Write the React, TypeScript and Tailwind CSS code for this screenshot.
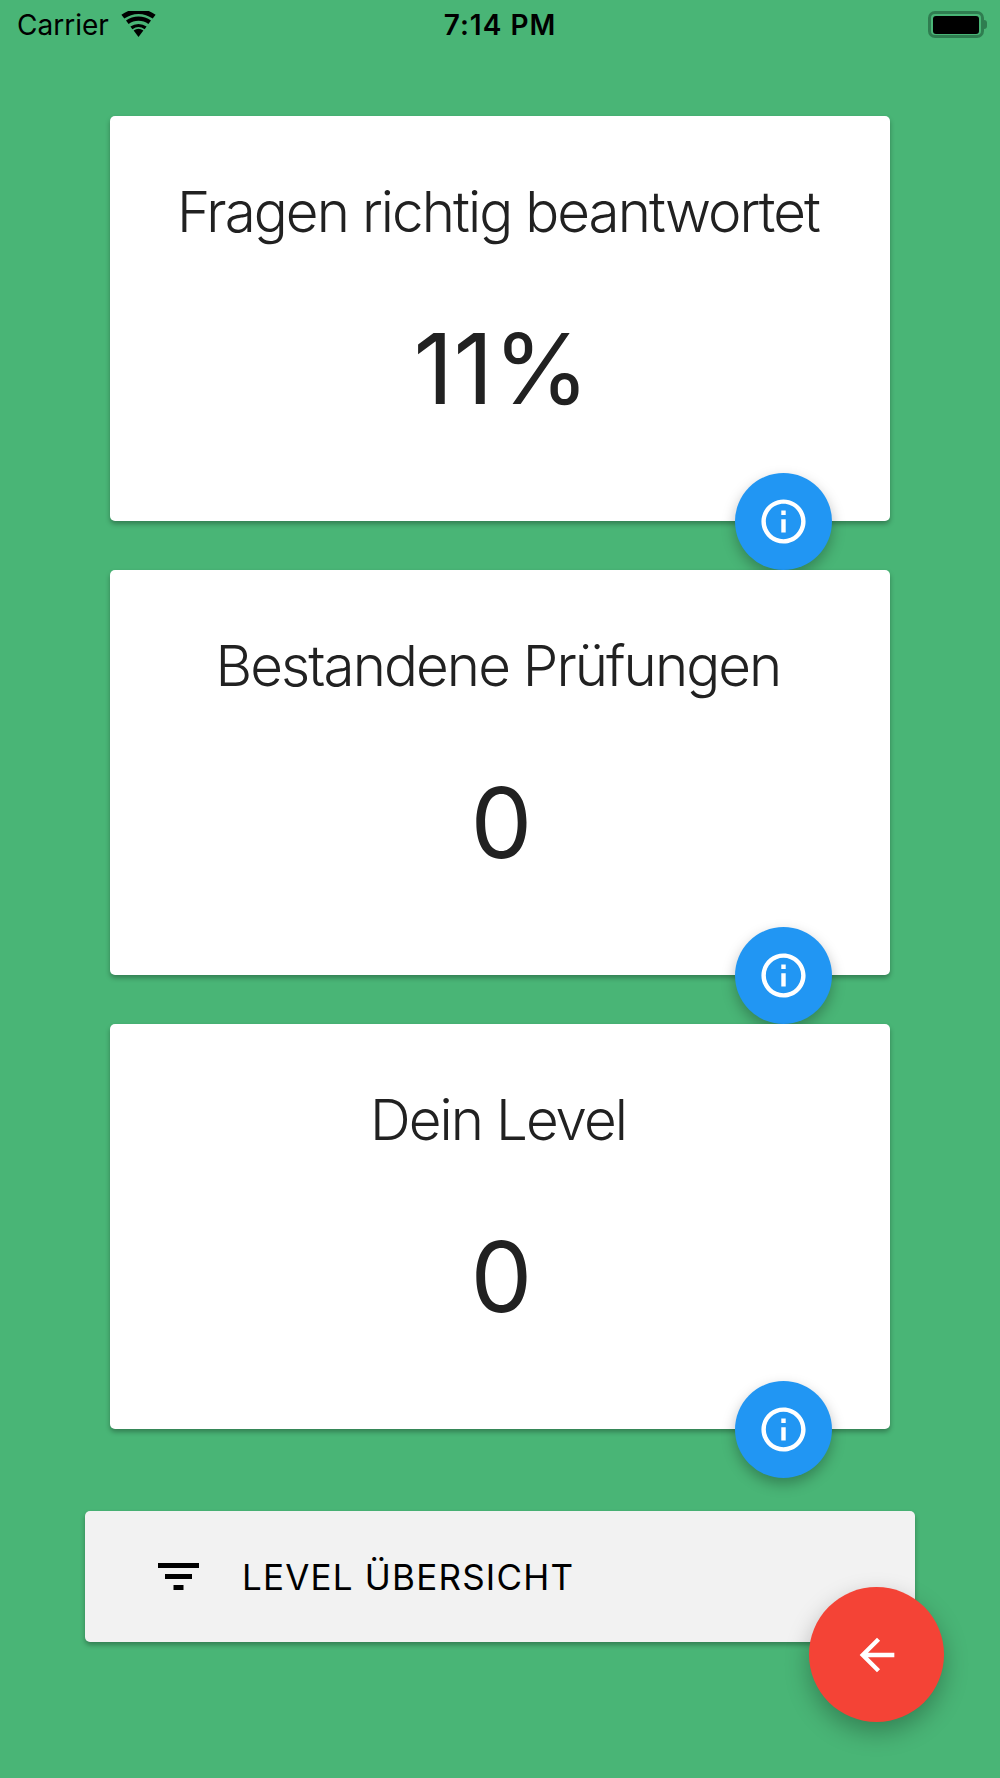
function Wifi() {
  return (
    <svg viewBox="0 0 35 26" className="h-[26px] w-[35px]" aria-hidden>
      <path d="M17.5 26 12.6 19.4a8.4 8.4 0 0 1 9.8 0L17.5 26Z" fill="#000" />
      <path d="M9.4 15.6a13.6 13.6 0 0 1 16.2 0l-2 2.6a10.4 10.4 0 0 0-12.2 0l-2-2.6Z" fill="#000" />
      <path d="M5 9.6a21 21 0 0 1 25 0l-2.6 3.4a16.6 16.6 0 0 0-19.8 0L5 9.6Z" fill="#000" />
      <path d="M.4 3.8a28.6 28.6 0 0 1 34.2 0l-2.9 3.8a23.8 23.8 0 0 0-28.4 0L.4 3.8Z" fill="#000" />
    </svg>
  );
}

function StatusBar() {
  return (
    <div className="relative flex h-[50px] items-start justify-between pl-[17px] pr-[13px] pt-[11px] text-black">
      <div className="flex items-start gap-[12px]">
        <span className="text-[28px] leading-[29px] font-normal">Carrier</span>
        <Wifi />
      </div>
      <span className="absolute left-0 right-0 text-center text-[28px] leading-[29px] font-semibold tracking-[1px]">7:14 PM</span>
      <div className="flex items-center">
        <div className="flex h-[27px] w-[56px] items-center justify-center rounded-[7px] border-[3px] border-[#2f7d50]">
          <div className="h-[18px] w-[46px] rounded-[3px] bg-black" />
        </div>
        <div className="h-[9px] w-[3px] rounded-r-sm bg-[#2f7d50]" />
      </div>
    </div>
  );
}

function InfoIcon() {
  return (
    <svg viewBox="0 0 24 24" className="h-[53px] w-[53px]" fill="#fff" aria-hidden>
      <path d="M11 7h2v2h-2zm0 4h2v6h-2zm1-9C6.48 2 2 6.48 2 12s4.48 10 10 10 10-4.48 10-10S17.52 2 12 2zm0 18c-4.41 0-8-3.59-8-8s3.59-8 8-8 8 3.59 8 8-3.59 8-8 8z" />
    </svg>
  );
}

function StatCard({ title, value }: { title: string; value: string }) {
  return (
    <div className="relative h-[405px] rounded-[5px] bg-white text-center text-[#212121] shadow-[0_3px_5px_rgba(0,0,0,0.3)]">
      <div className="pr-[4px] pt-[62px] text-[56.5px] leading-[68px] font-light tracking-[-1.95px]">{title}</div>
      <div className="pl-[3px] pt-[65px] text-[98px] leading-[116px] font-normal">{value}</div>
      <button className="absolute bottom-[-49px] right-[58px] flex h-[97px] w-[97px] items-center justify-center rounded-full bg-[#2196f3] shadow-[0_6px_14px_rgba(0,0,0,0.28)]">
        <InfoIcon />
      </button>
    </div>
  );
}

export default function App() {
  return (
    <div className="relative h-[1778px] w-[1000px] overflow-hidden bg-[#49b576] font-['Inter',sans-serif]">
      <StatusBar />
      <div className="flex flex-col gap-[49px] px-[110px] pt-[66px]">
        <StatCard title="Fragen richtig beantwortet" value="11%" />
        <StatCard title="Bestandene Prüfungen" value="0" />
        <StatCard title="Dein Level" value="0" />
      </div>
      <div className="mx-[85px] mt-[82px] flex h-[131px] items-center rounded-[5px] bg-[#f2f2f2] pl-[73px] shadow-[0_3px_5px_rgba(0,0,0,0.3)]">
        <svg viewBox="0 0 41 27" className="h-[27px] w-[41px]" aria-hidden>
          <rect x="0" y="0" width="41" height="5" fill="#000" />
          <rect x="7" y="11" width="27" height="5" fill="#000" />
          <rect x="15.5" y="22" width="10" height="5" fill="#000" />
        </svg>
        <span className="ml-[43px] text-[35px] leading-[40px] font-normal tracking-[1.2px] text-black">LEVEL ÜBERSICHT</span>
      </div>
      <button className="absolute left-[809px] top-[1587px] flex h-[135px] w-[135px] items-center justify-center rounded-full bg-[#f44336] shadow-[0_10px_24px_rgba(0,0,0,0.28)]">
        <svg viewBox="0 0 24 24" className="h-[52px] w-[52px]" fill="#fff" aria-hidden>
          <path d="M20 11H7.83l5.59-5.59L12 4l-8 8 8 8 1.41-1.41L7.83 13H20v-2z" />
        </svg>
      </button>
    </div>
  );
}
